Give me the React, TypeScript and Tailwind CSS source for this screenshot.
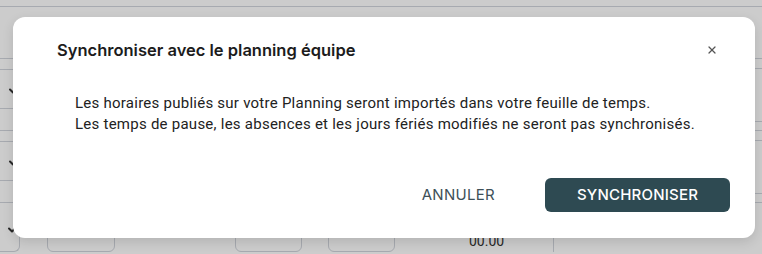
import { X } from 'lucide-react'

function Chevron() {
  return (
    <svg className="w-[10px] h-[10px] text-[#333]" viewBox="0 0 10 10" fill="none" stroke="currentColor" strokeWidth={2} strokeLinecap="round" strokeLinejoin="round">
      <path d="M2 3.5l3 3 3-3" />
    </svg>
  )
}

function Row() {
  return (
    <div className="grid grid-cols-[20px_1fr] h-[72px]">
      <div className="flex flex-col">
        <div className="h-[11px] border-t border-gray-300" />
        <div className="h-[39px] border-t border-gray-300 flex items-start justify-end pr-[2px] pt-[16px]">
          <Chevron />
        </div>
        <div className="flex-1 border-t border-gray-300" />
      </div>
      <div className="flex flex-col">
        <div className="h-[10px] border-t border-gray-300" />
        <div className="h-[53px] border-t border-gray-300" />
        <div className="flex-1 border-t border-gray-300" />
      </div>
    </div>
  )
}

export default function App() {
  return (
    <div className="relative w-[762px] h-[254px] overflow-hidden bg-white" style={{ fontFamily: 'Roboto, sans-serif' }}>
      {/* page behind the dialog */}
      <div className="flex flex-col">
        <div className="h-[6px]" />
        <div className="h-[52px] border-t border-gray-300" />
        <Row />
        <Row />
        <div className="grid grid-cols-[20px_1fr] h-[52px] border-t border-gray-300">
          <div className="flex items-end justify-end pr-[2px] pb-[16px] border-r border-b border-gray-300 rounded-br-md mb-[2px]">
            <Chevron />
          </div>
          <div className="flex items-end pb-[2px]">
            <div className="ml-[27px] w-[68px] h-[30px] border border-gray-300 rounded-md" />
            <div className="ml-[120px] w-[67px] h-[30px] border border-gray-300 rounded-md" />
            <div className="ml-[26px] w-[67px] h-[30px] border border-gray-300 rounded-md" />
            <div className="ml-[74px] w-[40px] text-[14px] leading-[16px] text-[#333] mb-[3px]">00.00</div>
            <div className="ml-[44px] h-full border-l border-gray-300" />
          </div>
        </div>
      </div>

      {/* overlay */}
      <div className="absolute inset-0 bg-black/20" />

      {/* dialog */}
      <div className="absolute left-[13px] top-[17px] w-[742px] h-[221px] bg-white rounded-xl shadow-[0_4px_12px_rgba(0,0,0,0.12)] flex flex-col pt-[21px] pb-[26px]">
        <div className="flex items-center justify-between pl-[44px] pr-[37px] h-[24px]">
          <h2 className="text-[16.5px] font-semibold text-[#1c1c1c]" style={{ fontFamily: 'Inter, sans-serif' }}>
            Synchroniser avec le planning équipe
          </h2>
          <button className="text-[#555] flex items-center">
            <X size={12} strokeWidth={2.5} />
          </button>
        </div>
        <div className="pl-[62px] pt-[31px] text-[15px] leading-[21px] tracking-[0.25px] text-[#222]">
          <p>Les horaires publiés sur votre Planning seront importés dans votre feuille de temps.</p>
          <p>Les temps de pause, les absences et les jours fériés modifiés ne seront pas synchronisés.</p>
        </div>
        <div className="mt-auto flex items-center justify-end pr-[25px] gap-[36px]" style={{ fontFamily: 'Inter, sans-serif' }}>
          <button className="h-[34px] px-[14px] text-[15px] font-normal text-[#3e5058] tracking-[0.3px]">
            ANNULER
          </button>
          <button className="h-[34px] w-[185px] rounded-md bg-[#2e4a52] text-white text-[15px] font-medium tracking-[0.2px]">
            SYNCHRONISER
          </button>
        </div>
      </div>
    </div>
  )
}
